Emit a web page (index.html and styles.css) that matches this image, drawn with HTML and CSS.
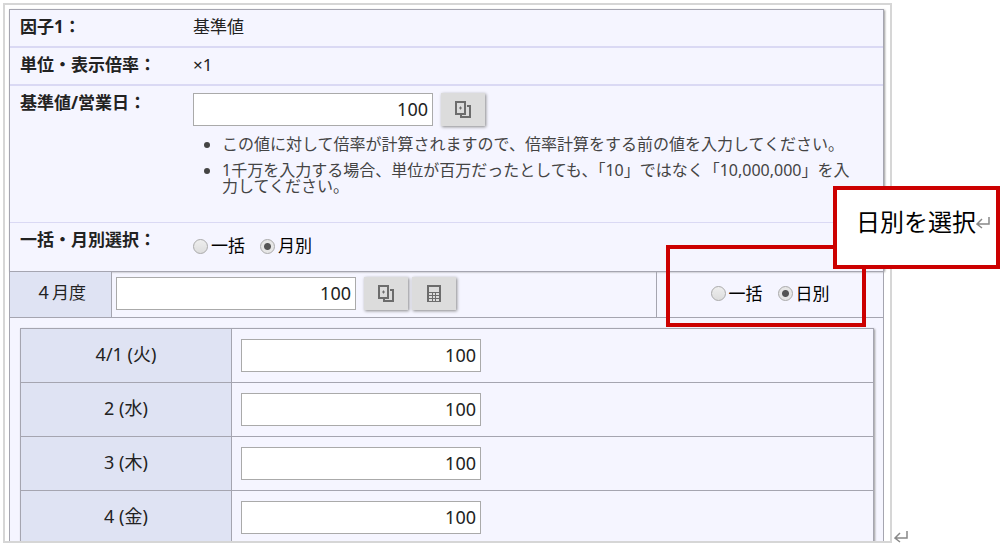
FILE: index.html
```html
<!DOCTYPE html>
<html lang="ja">
<head>
    <meta charset="UTF-8">
    <meta name="viewport" content="width=device-width, initial-scale=1.0">
    <title>因子1 基準値</title>
    <link rel="stylesheet" href="styles.css">
</head>
<body>
    <svg class="symbols" aria-hidden="true">
        <symbol id="icon-copy" viewBox="0 0 16 17">
            <path d="M1 1h9v12H1z M12 5h3v11H6v-2" fill="none" stroke="currentColor" stroke-width="2"/>
            <path d="M4 7h3M5.500 5.500v3" stroke="currentColor" stroke-width="1"/>
        </symbol>
        <symbol id="icon-calc" viewBox="0 0 16 17">
            <path fill="currentColor" fill-rule="evenodd" d="M1 0h14v17H1z M3 2v5h10V2z M3 8v2h3V8z M7 8v2h2V8z M10 8v2h3V8z M3 11v2h3v-2z M7 11v2h2v-2z M10 11v2h3v-2z M3 14v2h3v-2z M7 14v2h2v-2z M10 14v2h3v-2z"/>
        </symbol>
        <symbol id="icon-return" viewBox="0 0 14 13">
            <path d="M13 1v7H1M6 3L1 8l5 4" fill="none" stroke="currentColor" stroke-width="1.5"/>
        </symbol>
    </svg>

    <main class="frame">
        <form class="panel">
            <div class="settings">
                <div class="row">
                    <span class="row-label">因子1：</span>
                    <span class="row-value">基準値</span>
                </div>
                <div class="row">
                    <span class="row-label">単位・表示倍率：</span>
                    <span class="row-value">×1</span>
                </div>
                <div class="row row-base">
                    <label class="row-label" for="base">基準値/営業日：</label>
                    <div class="row-value">
                        <div class="field">
                            <input class="number" id="base" type="text" value="100">
                            <button class="icon-btn" type="button" aria-label="コピー"><svg><use href="#icon-copy"/></svg></button>
                        </div>
                        <ul class="notes">
                            <li>この値に対して倍率が計算されますので、倍率計算をする前の値を入力してください。</li>
                            <li>1千万を入力する場合、単位が百万だったとしても、「10」ではなく「10,000,000」を入力してください。</li>
                        </ul>
                    </div>
                </div>
                <div class="row row-select">
                    <span class="row-label">一括・月別選択：</span>
                    <div class="row-value radios">
                        <label><input type="radio" name="period">一括</label>
                        <label><input type="radio" name="period" checked>月別</label>
                    </div>
                </div>
            </div>

            <div class="month">
                <label class="month-label" for="april">４月度</label>
                <div class="field month-field">
                    <input class="number" id="april" type="text" value="100">
                    <div class="btn-group">
                        <button class="icon-btn" type="button" aria-label="コピー"><svg><use href="#icon-copy"/></svg></button>
                        <button class="icon-btn" type="button" aria-label="電卓"><svg><use href="#icon-calc"/></svg></button>
                    </div>
                </div>
                <div class="radios month-mode">
                    <label><input type="radio" name="april-mode">一括</label>
                    <label><input type="radio" name="april-mode" checked>日別</label>
                </div>
            </div>

            <div class="days-wrap">
                <table class="days">
                    <tr>
                        <th scope="row"><label for="day1">4/1 (火)</label></th>
                        <td><input class="number" id="day1" type="text" value="100"></td>
                    </tr>
                    <tr>
                        <th scope="row"><label for="day2">2 (水)</label></th>
                        <td><input class="number" id="day2" type="text" value="100"></td>
                    </tr>
                    <tr>
                        <th scope="row"><label for="day3">3 (木)</label></th>
                        <td><input class="number" id="day3" type="text" value="100"></td>
                    </tr>
                    <tr>
                        <th scope="row"><label for="day4">4 (金)</label></th>
                        <td><input class="number" id="day4" type="text" value="100"></td>
                    </tr>
                </table>
            </div>
        </form>
    </main>

    <aside class="margin">
        <svg class="return"><use href="#icon-return"/></svg>
    </aside>

    <div class="highlight"></div>
    <div class="callout">日別を選択<svg class="return"><use href="#icon-return"/></svg></div>
</body>
</html>
```

FILE: styles.css
```css
:root {
    --panel-color: #f5f5ff;
    --label-color: #dfe3f3;
    --line-color: #a5a5b0;
    --soft-line-color: #dad9f4;
    --accent-color: #cc0000;
}

* {
    margin: 0;
    padding: 0;
    box-sizing: border-box;
}

body {
    font-family: "Noto Sans", "Noto Sans CJK JP", sans-serif;
    font-size: 17px;
    line-height: 24px;
    color: #222;
    background-color: #fff;
    height: 100vh;
    padding: 3px 3px 6px;
    display: flex;
    position: relative;
    overflow: hidden;
}

.symbols {
    position: absolute;
    width: 0;
    height: 0;
}

.frame {
    flex: 1;
    border: 2px solid #d6d6d6;
    padding: 4px 6px 0 4px;
    overflow: hidden;
}

.panel {
    background-color: var(--panel-color);
}

.settings {
    border: 1px solid var(--line-color);
    border-bottom: none;
    box-shadow: 1px 1px 2px #999;
}

/* Form rows */
.row {
    display: flex;
    padding: 5px 20px 7px 10px;
    border-bottom: 2px solid var(--soft-line-color);
}

.row-label {
    width: 173px;
    flex-shrink: 0;
    font-weight: bold;
}

.row-value {
    flex: 1;
}

.row-base {
    padding-bottom: 28px;
    border-bottom-width: 1px;
}

.row-base .field {
    padding-top: 2px;
}

.row-select {
    padding-bottom: 13px;
    border-bottom: none;
}

.row-select .radios {
    padding-top: 6px;
}

.field {
    display: flex;
    align-items: center;
    gap: 8px;
}

.number {
    width: 240px;
    height: 33px;
    padding: 0 4px 2px;
    border: 1px solid #aaa;
    background-color: #fff;
    font-family: inherit;
    font-size: 18px;
    color: #222;
    text-align: right;
}

.btn-group {
    display: flex;
    gap: 4px;
}

.icon-btn {
    width: 44px;
    height: 33px;
    display: flex;
    align-items: center;
    justify-content: center;
    border: none;
    background-color: #dcdcdc;
    box-shadow: 1px 1px 3px #888;
    color: #6c6c6c;
    cursor: pointer;
}

.icon-btn svg {
    width: 16px;
    height: 17px;
}

.notes {
    margin-top: 10px;
    padding-left: 29px;
    font-size: 16px;
    line-height: 16px;
    color: #444;
}

.notes li + li {
    margin-top: 10px;
}

.radios {
    display: flex;
    gap: 15px;
    color: #000;
}

.radios label {
    display: flex;
    align-items: center;
    gap: 3px;
}

.radios input {
    appearance: none;
    width: 15px;
    height: 15px;
    border: 1px solid #aaa;
    border-radius: 50%;
    background: linear-gradient(#eee, #ddd);
}

.radios input:checked {
    background: radial-gradient(circle, #555 0 3px, #e6e6e6 4px);
}

/* Month */
.month {
    display: flex;
    border: 1px solid var(--line-color);
}

.month-label {
    width: 102px;
    padding-bottom: 3px;
    display: flex;
    align-items: center;
    justify-content: center;
    border-right: 1px solid var(--line-color);
    background-color: var(--label-color);
}

.month-field {
    flex: 1;
    padding: 5px 4px 7px;
}

.month-mode {
    width: 227px;
    padding-bottom: 2px;
    justify-content: center;
    border-left: 1px solid var(--line-color);
}

/* Days */
.days-wrap {
    padding: 10px 9px 10px 10px;
    border: 1px solid var(--line-color);
    border-top: none;
}

.days {
    width: 100%;
    border-collapse: collapse;
    box-shadow: 1px 1px 2px #999;
}

.days th,
.days td {
    border: 1px solid var(--line-color);
    padding: 10px 9px;
}

.days th {
    width: 211px;
    padding-bottom: 14px;
    font-size: 18px;
    font-weight: normal;
    background-color: var(--label-color);
}

.days td {
    background-color: var(--panel-color);
}

.days .number {
    display: block;
}

/* Annotations */
.margin {
    width: 109px;
    padding-left: 2px;
    display: flex;
    align-items: flex-end;
}

.return {
    width: 14px;
    height: 13px;
    color: #888;
}

.highlight {
    position: absolute;
    top: 245px;
    right: 138px;
    width: 200px;
    height: 82px;
    border: 4px solid var(--accent-color);
}

.callout {
    position: absolute;
    top: 186px;
    right: 4px;
    width: 167px;
    padding: 16px 0 27px 19px;
    display: flex;
    align-items: center;
    border: 4px solid var(--accent-color);
    background-color: #fff;
    font-size: 24px;
    line-height: 32px;
    color: #000;
}
```
